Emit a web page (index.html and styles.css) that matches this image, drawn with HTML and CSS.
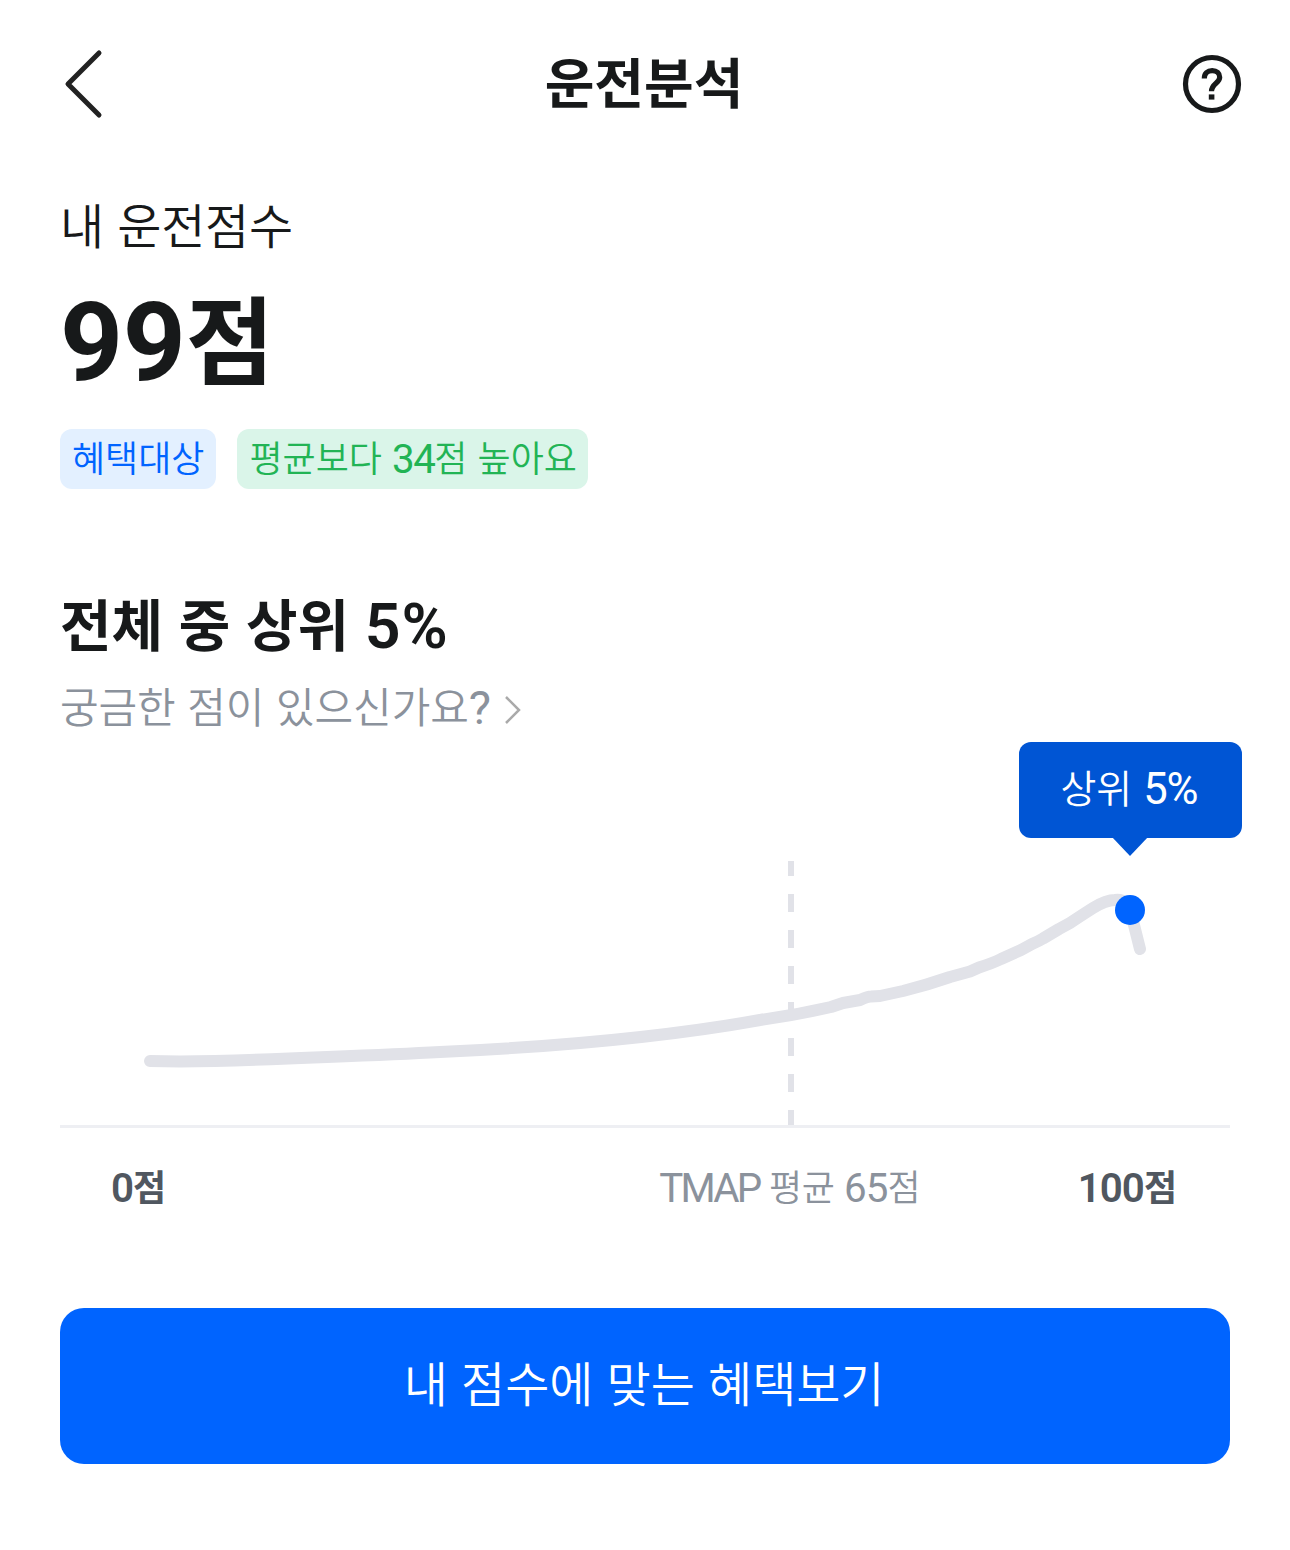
FILE: index.html
```html
<!DOCTYPE html>
<html lang="ko">
<head>
<meta charset="utf-8">
<title>운전분석</title>
<link rel="stylesheet" href="styles.css">
</head>
<body>
<header class="topbar">
  <svg class="back" width="44" height="72" viewBox="0 0 44 72"><path d="M39 5 8 36l31 31"/></svg>
  <h1 class="title">운전분석</h1>
  <svg class="help" width="60" height="60" viewBox="0 0 60 60"><circle cx="30" cy="30" r="26.500"/><path d="M22.300 24.500C22.300 19.500 25.500 16.700 30.200 16.700s7.500 2.700 7.500 6.600c0 5.800-8.200 6.400-8.200 14"/><path d="M26.800 43h5.600"/></svg>
</header>
<main class="content">
  <p class="label">내 운전점수</p>
  <p class="score"><span class="num">99</span>점</p>
  <div class="tags">
    <span class="tag tag-blue">혜택대상</span>
    <span class="tag tag-green">평균보다 <span class="num">34</span>점 높아요</span>
  </div>
  <h2 class="rank">전체 중 상위 <span class="num">5%</span></h2>
  <p class="more"><span>궁금한 점이 있으신가요<span class="num">?</span></span><svg class="chevron" width="20" height="32" viewBox="0 0 20 32"><path d="m3 3 13 13L3 29"/></svg></p>
  <section class="chart">
    <svg class="plot" width="1170" height="381" viewBox="60 748 1170 381">
      <path class="average" d="M791 861V1125"/>
      <path class="axis" d="M60 1126.500H1230"/>
      <path class="curve" d="M150 1061L180 1061.500C230 1061 280 1059 327 1057C365 1055.500 403 1054 440 1052C550 1047 660 1038 760 1020Q796 1015 831 1007Q840 1004 843 1003L860 1000Q869 996 871 996.500L880 996L903 991Q927 985 950 977L970 971.500L979 967.500Q993 963 1001 959L1021 950L1032 944Q1039 941 1043 938.500L1059 929L1070 923Q1079 917 1093 908Q1106 900 1115 900Q1127 898 1132 917L1140 949"/>
      <circle class="dot" cx="1130" cy="910" r="15"/>
    </svg>
    <div class="tooltip">상위 <span class="num">5%</span></div>
  </section>
  <div class="scale"><b><span class="num">0</span>점</b><span class="mean"><span class="num tmap">TMAP</span> 평균 <span class="num">65</span>점</span><b class="max"><span class="num">100</span>점</b></div>
  <button class="cta">내 점수에 맞는 혜택보기</button>
</main>
</body>
</html>
```
FILE: styles.css
```css
* { box-sizing: border-box; }
body { margin: 0; background: #fff; color: #17191a; font-family: "Noto Sans CJK KR", sans-serif; font-weight: 350; }
h1, h2, p { margin: 0; }
svg { fill: none; flex: none; }
.num { font-family: Roboto, sans-serif; font-size: 1.12em; font-weight: 400; line-height: 0; letter-spacing: -.025em; vertical-align: -1px; }

.topbar { height: 168px; padding: 0 48px 0 60px; display: flex; justify-content: space-between; align-items: center; }
.back { stroke: #222; stroke-width: 5; stroke-linecap: round; stroke-linejoin: round; }
.help { stroke: #17191a; stroke-width: 5.2; }
.title { font-size: 54px; font-weight: 700; line-height: 80px; padding: 0 0 7px 2px; }

.content { padding: 0 60px; }
.label { font-size: 48px; line-height: 110px; letter-spacing: -.2px; }
.score { font-size: 96px; font-weight: 700; line-height: 115px; margin-bottom: 36px; }
.score .num { font-size: 110px; font-weight: 700; letter-spacing: -.3px; vertical-align: -3px; }
.tags { display: flex; gap: 21px; }
.tag { height: 60px; padding: 0 12px; border-radius: 12px; font-size: 36px; line-height: 54px; white-space: nowrap; }
.tag-blue { background: #e3f0ff; color: #0064ff; }
.tag-green { width: 351px; background: #daf5e9; color: #22b455; }
.tag .num { letter-spacing: -1.500px; }
.rank { margin-top: 92px; font-size: 56px; font-weight: 700; line-height: 81px; }
.rank .num { font-weight: 600; letter-spacing: 1px; vertical-align: -2px; }
.more { display: flex; align-items: center; gap: 13px; font-size: 42px; line-height: 86px; color: #8b929c; letter-spacing: -.1px; }
.more svg { margin-top: 10px; stroke: #aaa; stroke-width: 2.5; }

.chart { position: relative; }
.plot { display: block; }
.average { stroke: #e1e2e8; stroke-width: 6; stroke-dasharray: 18; stroke-dashoffset: 3; }
.axis { stroke: #eeeff3; stroke-width: 3; }
.curve { stroke: #e1e2e8; stroke-width: 12; stroke-linecap: round; stroke-linejoin: round; }
.dot { fill: #0064ff; }
.tooltip { position: absolute; top: -6px; left: 958.5px; width: 223px; height: 96px; padding-right: 2px; border-radius: 12px; background: #0055d4; color: #fff; font-size: 39px; line-height: 88px; text-align: center; }
.tooltip::after { content: ""; position: absolute; top: 95px; left: 93px; border: solid transparent; border-width: 19px 18.5px 0; border-top-color: #0055d4; }
.scale { display: flex; padding: 0 53px 0 51px; font-size: 36px; line-height: 112px; color: #505760; }
.scale b .num { font-weight: 600; }
.mean { margin-left: 493px; color: #8b929c; letter-spacing: -.4px; }
.mean .tmap { letter-spacing: -2.800px; }
.max { margin-left: auto; }
.cta { display: block; width: 100%; height: 156px; margin-top: 67px; padding: 0 2px 10px 0; border: 0; border-radius: 24px; background: #0064ff; color: #fff; font: inherit; font-size: 48px; letter-spacing: -.1px; }
```
